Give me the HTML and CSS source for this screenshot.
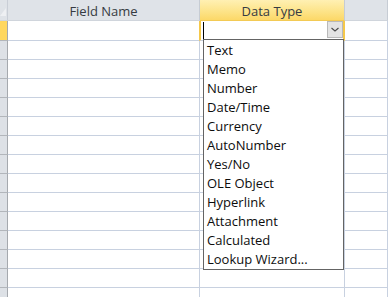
FILE: index.html
```html
<html>
<head>
    <meta charset="UTF-8">
    <title>Table Design</title>
    <link rel="stylesheet" href="styles.css">
</head>
<body>
    <div id="sheet">
        <div class="head corner"><span class="tri"></span></div>
        <div class="head">Field Name</div>
        <div class="head active">Data Type</div>
        <div class="head"></div>

        <div class="sel current first"></div>
        <div class="cell first"></div>
        <div class="cell first typecell">
            <span class="caret"></span>
            <span class="dropbtn"><svg width="14" height="15" viewBox="0 0 14 15"><polyline points="3.5,6 7,9 10.5,6" fill="none" stroke="#4a4a4a" stroke-width="1.1"/></svg></span>
        </div>
        <div class="cell first"></div>
    </div>
    <ul id="typelist">
        <li>Text</li>
        <li>Memo</li>
        <li>Number</li>
        <li>Date/Time</li>
        <li>Currency</li>
        <li>AutoNumber</li>
        <li>Yes/No</li>
        <li>OLE Object</li>
        <li>Hyperlink</li>
        <li>Attachment</li>
        <li>Calculated</li>
        <li>Lookup Wizard...</li>
    </ul>
    <script>
        var sheet = document.getElementById("sheet");
        var rows = "";
        for (var i = 0; i < 14; i++) {
            rows += "<div class='sel'></div><div class='cell'></div><div class='cell'></div><div class='cell'></div>";
        }
        sheet.insertAdjacentHTML("beforeend", rows);
    </script>
</body>
</html>
```

FILE: styles.css
```css
body{
    margin: 0;
    font-family: "Open Sans", sans-serif;
    font-size: 13px;
    background: #ffffff;
    overflow: hidden;
    position: relative;
}
#sheet{
    display: grid;
    grid-template-columns: 8px 192px 145px 1fr;
    grid-auto-rows: 19px;
    grid-template-rows: 21px 20px;
}
.head{
    box-sizing: border-box;
    background: #dfe3e8;
    border-right: 1px solid #c6ccd4;
    border-bottom: 1px solid #d0d5dc;
    color: #363b42;
    text-align: center;
    line-height: 21px;
    padding-top: 1px;
}
.corner{
    position: relative;
    border-right: 1px solid #c9ced6;
}
.tri{
    position: absolute;
    left: 0;
    top: 8px;
    width: 0;
    height: 0;
    border-left: 6px solid transparent;
    border-bottom: 8px solid #eef0f3;
}
.head.active{
    background: linear-gradient(#fff0b3, #fde48a 55%, #fcd868);
    border-right: 1px solid #c6ccd4;
    border-bottom: 1px solid #f3ca55;
}
.sel{
    box-sizing: border-box;
    background: #dde1e6;
    border-right: 1px solid #a5a9ae;
    border-bottom: 1px solid #b2b6bb;
}
.sel.current{
    background: #ffd75e;
}
.cell{
    box-sizing: border-box;
    border-right: 1px solid #c8d1e0;
    border-bottom: 1px solid #c8d1e0;
}
.typecell{
    position: relative;
    border-left: 2px solid #f5c84a;
    border-right: 2px solid #f5c84a;
    margin-left: -1px;
}
.caret{
    position: absolute;
    left: 2px;
    top: 1px;
    width: 1px;
    height: 17px;
    background: #000000;
}
.dropbtn{
    position: absolute;
    right: 0;
    top: 0;
    width: 16px;
    height: 17px;
    box-sizing: border-box;
    background: #e3e3e3;
    border: 1px solid #b9b9b9;
}
.dropbtn svg{
    display: block;
}
#typelist{
    position: absolute;
    left: 203px;
    top: 39px;
    width: 141px;
    height: 231px;
    box-sizing: border-box;
    margin: 0;
    padding: 1px 0 0 0;
    list-style: none;
    background: #ffffff;
    border: 1px solid #646464;
}
#typelist li{
    height: 19px;
    line-height: 19px;
    padding-left: 3px;
    color: #0d0d0d;
}
```
